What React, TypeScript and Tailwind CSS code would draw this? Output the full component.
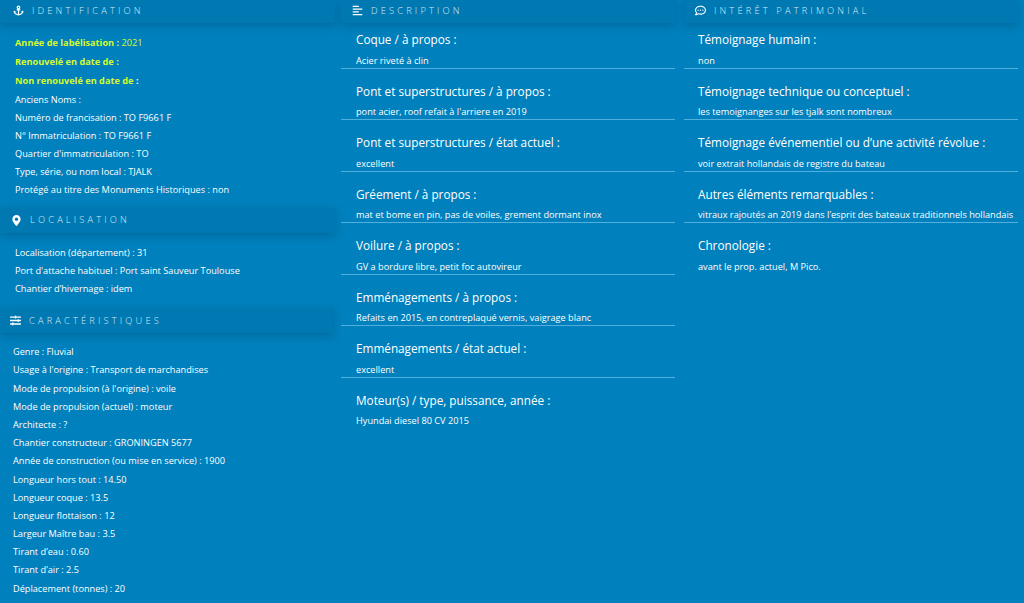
import { FaAnchor, FaMapMarkerAlt, FaSlidersH, FaAlignLeft, FaRegCommentDots } from 'react-icons/fa';
import type { ReactNode } from 'react';

const localisation = [
  'Localisation (département) : 31',
  "Port d'attache habituel : Port saint Sauveur Toulouse",
  'Chantier d’hivernage : idem',
];

const caracteristiques = [
  'Genre : Fluvial',
  "Usage à l'origine : Transport de marchandises",
  "Mode de propulsion (à l'origine) : voile",
  'Mode de propulsion (actuel) : moteur',
  'Architecte : ?',
  'Chantier constructeur : GRONINGEN 5677',
  'Année de construction (ou mise en service) : 1900',
  'Longueur hors tout : 14.50',
  'Longueur coque : 13.5',
  'Longueur flottaison : 12',
  'Largeur Maître bau : 3.5',
  'Tirant d’eau : 0.60',
  'Tirant d’air : 2.5',
  'Déplacement (tonnes) : 20',
];

const identification = [
  'Anciens Noms :',
  'Numéro de francisation : TO F9661 F',
  'N° Immatriculation : TO F9661 F',
  "Quartier d'immatriculation : TO",
  'Type, série, ou nom local : TJALK',
  'Protégé au titre des Monuments Historiques : non',
];

const description = [
  ['Coque / à propos :', 'Acier riveté à clin'],
  ['Pont et superstructures / à propos :', "pont acier, roof refait à l'arriere en 2019"],
  ['Pont et superstructures / état actuel :', 'excellent'],
  ['Gréement / à propos :', 'mat et bome en pin, pas de voiles, grement dormant inox'],
  ['Voilure / à propos :', 'GV a bordure libre, petit foc autovireur'],
  ['Emménagements / à propos :', 'Refaits en 2015, en contreplaqué vernis, vaigrage blanc'],
  ['Emménagements / état actuel :', 'excellent'],
  ['Moteur(s) / type, puissance, année :', 'Hyundai diesel 80 CV 2015'],
];

const patrimoine = [
  ['Témoignage humain :', 'non'],
  ['Témoignage technique ou conceptuel :', 'les temoignanges sur les tjalk sont nombreux'],
  ['Témoignage événementiel ou d’une activité révolue :', 'voir extrait hollandais de registre du bateau'],
  ['Autres éléments remarquables :', 'vitraux rajoutés an 2019 dans l’esprit des bateaux traditionnels hollandais'],
  ['Chronologie :', 'avant le prop. actuel, M Pico.'],
];

function SectionTitle({ icon, title, className }: { icon: ReactNode; title: string; className: string }) {
  return (
    <div className={`flex h-[25px] items-center bg-[#0079b3] shadow-[0_3px_8px_rgba(0,50,90,0.28)] text-[#d5ecf7] ${className}`}>
      <span className="flex w-[17px] justify-center text-[11px] text-white">{icon}</span>
      <span className="ml-[5px] text-[9.3px] font-light tracking-[0.34em] uppercase">{title}</span>
    </div>
  );
}

function Row({ children }: { children: ReactNode }) {
  return <div className="h-[18.2px] leading-[18px] whitespace-nowrap">{children}</div>;
}

function Entry({ label, value, last, inset }: { label: string; value: string; last: boolean; inset: string }) {
  return (
    <div className={`h-[51.5px] pt-[12px] ${inset} ${last ? '' : 'border-b border-[#4fb0dd]'}`}>
      <div className="h-[20px] text-[11.75px] leading-[20px] whitespace-nowrap">{label}</div>
      <div className="mt-[4.5px] leading-[14px] whitespace-nowrap">{value}</div>
    </div>
  );
}

export default function App() {
  return (
    <div className="flex h-[603px] w-[1024px] overflow-hidden bg-[#0080bc] font-['Open_Sans',sans-serif] text-[9.2px] text-white">
      {/* Colonne gauche */}
      <aside className="w-[335px] shrink-0 -mt-[2px]">
        <SectionTitle icon={<FaAnchor />} title="Identification" className="pl-[10px]" />
        <div className="pl-[15px] pt-[11px]">
          <div className="h-[18.5px] leading-[18px] font-bold text-[#d6fb2e]">
            Année de labélisation : <span className="font-normal">2021</span>
          </div>
          <div className="h-[19px] leading-[18px] font-bold text-[#d6fb2e]">Renouvelé en date de :</div>
          <div className="h-[19px] leading-[18px] font-bold text-[#d6fb2e]">
            Non renouvelé en date de <span className="text-white">:</span>
          </div>
          {identification.map((line) => (
            <Row key={line}>{line}</Row>
          ))}
        </div>
        <SectionTitle icon={<FaMapMarkerAlt />} title="Localisation" className="mt-[8px] pl-[8px]" />
        <div className="pl-[15px] pt-[11px]">
          {localisation.map((line) => (
            <Row key={line}>{line}</Row>
          ))}
        </div>
        <SectionTitle icon={<FaSlidersH />} title="Caractéristiques" className="mt-[10px] w-[333px] pl-[7px]" />
        <div className="pl-[13px] pt-[10px]">
          {caracteristiques.map((line) => (
            <Row key={line}>{line}</Row>
          ))}
        </div>
      </aside>

      {/* Description */}
      <section className="ml-[6px] w-[334px] shrink-0 -mt-[2px]">
        <SectionTitle icon={<FaAlignLeft />} title="Description" className="pl-[8px]" />
        <div className="-mt-[5.7px]">
          {description.map(([label, value], i) => (
            <Entry key={label} label={label} value={value} last={i === description.length - 1} inset="pl-[15px]" />
          ))}
        </div>
      </section>

      {/* Intérêt patrimonial */}
      <section className="ml-[9px] w-[334px] shrink-0 -mt-[2px]">
        <SectionTitle icon={<FaRegCommentDots />} title="Intérêt patrimonial" className="pl-[8px]" />
        <div className="-mt-[5.7px]">
          {patrimoine.map(([label, value], i) => (
            <Entry key={label} label={label} value={value} last={i === patrimoine.length - 1} inset="pl-[14px]" />
          ))}
        </div>
      </section>
    </div>
  );
}
